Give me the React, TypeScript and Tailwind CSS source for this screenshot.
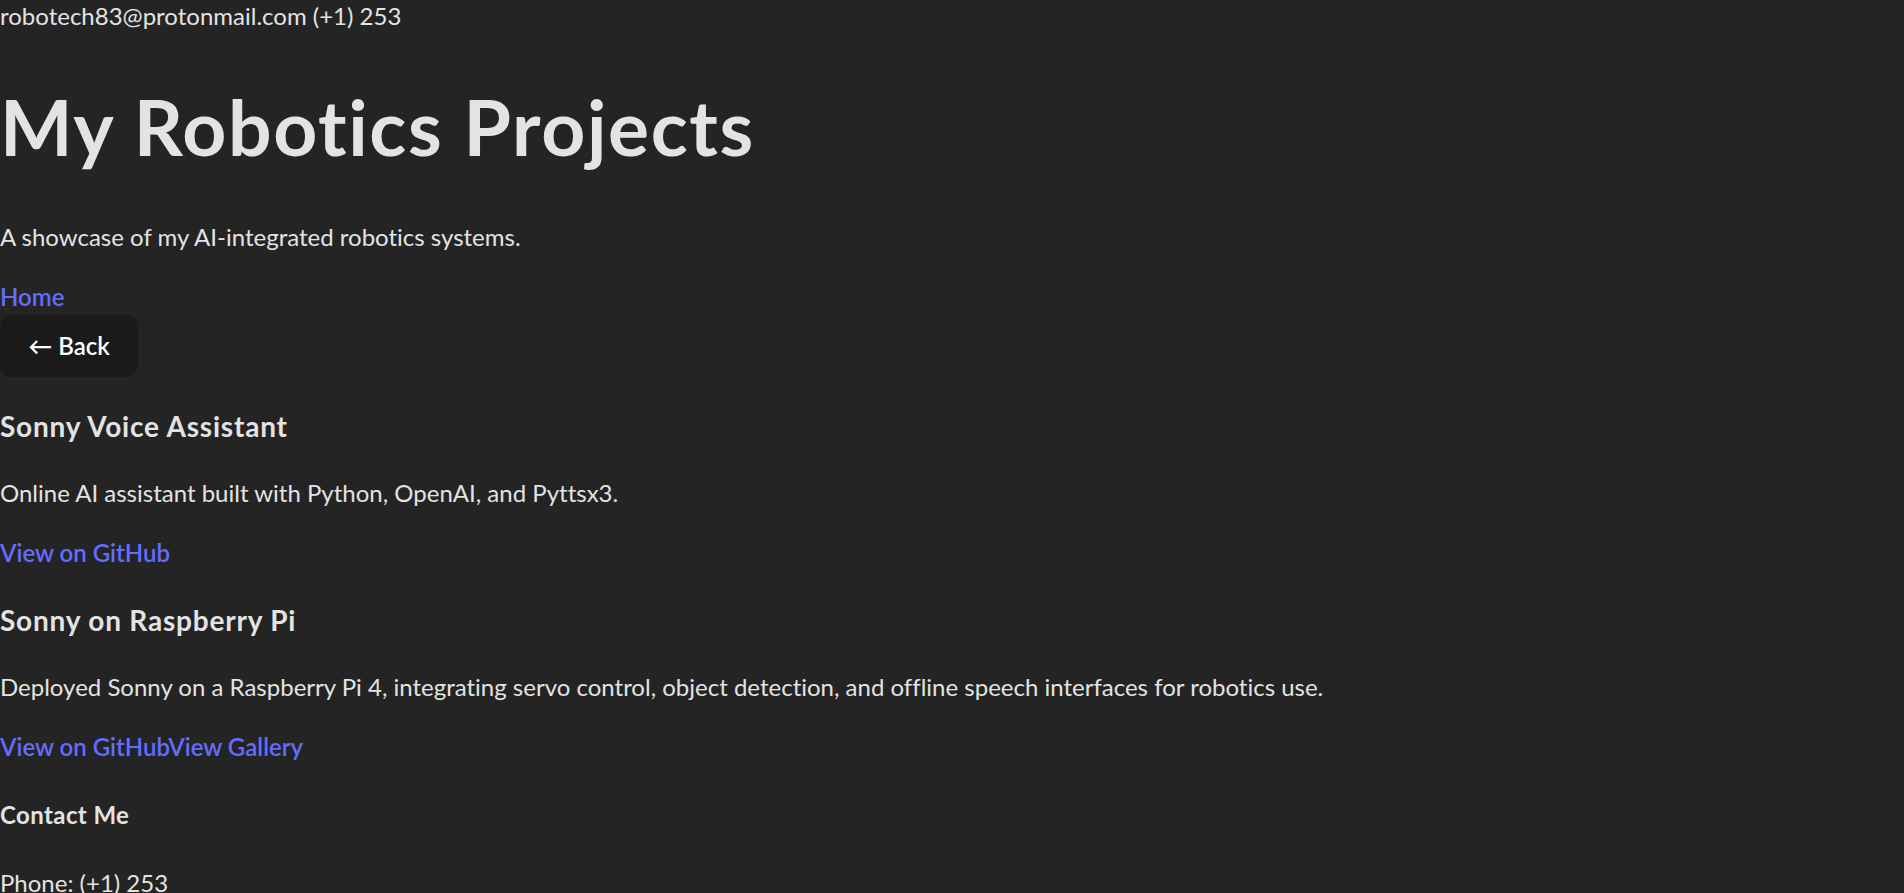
import React from "react";

type Project = {
  title: string;
  text: string;
  links: string[];
};

const projects: Project[] = [
  {
    title: "Sonny Voice Assistant",
    text: "Online AI assistant built with Python, OpenAI, and Pyttsx3.",
    links: ["View on GitHub"],
  },
  {
    title: "Sonny on Raspberry Pi",
    text: "Deployed Sonny on a Raspberry Pi 4, integrating servo control, object detection, and offline speech interfaces for robotics use.",
    links: ["View on GitHub", "View Gallery"],
  },
];

const App = () => {
  return (
    <div className="min-h-screen bg-[#242424] text-[#e3e3e3] font-['Segoe_UI',Lato,'Open_Sans',sans-serif] text-[24px] leading-[36px] antialiased [font-variant-ligatures:none]">
      <header>
        <p className="h-[36px] leading-[32px]">robotech83@protonmail.com (+1) 253</p>
        <h1 className="mt-[48px] text-[76.8px] leading-[84.5px] font-bold tracking-[1.6px]">
          My Robotics Projects
        </h1>
        <p className="mt-[50px]">A showcase of my AI-integrated robotics systems.</p>
      </header>

      <nav className="mt-[24px] h-[36px]">
        <a href="#" className="text-[#646cff] font-semibold">
          Home
        </a>
      </nav>

      <div>
        <button className="h-[62px] w-[138px] rounded-[12px] bg-[#1a1a1a] text-white font-semibold leading-[32px] border border-transparent">
          ← Back
        </button>
      </div>

      {projects.map((project, index) => (
        <section key={index}>
          <h3 className="mt-[28px] text-[28px] leading-[42px] font-bold tracking-[0.8px]">
            {project.title}
          </h3>
          <p className="mt-[28px]">{project.text}</p>
          <p className="mt-[24px]">
            {project.links.map((link, i) => (
              <a key={i} href="#" className="text-[#646cff] font-semibold">
                {link}
              </a>
            ))}
          </p>
        </section>
      ))}

      <section>
        <h4 className="mt-[32px] font-bold tracking-[0.4px]">Contact Me</h4>
        <p className="mt-[32px]">Phone: (+1) 253</p>
        <p className="mt-[24px]">Email: robotech83@protonmail.com</p>
      </section>
    </div>
  );
};

export default App;
